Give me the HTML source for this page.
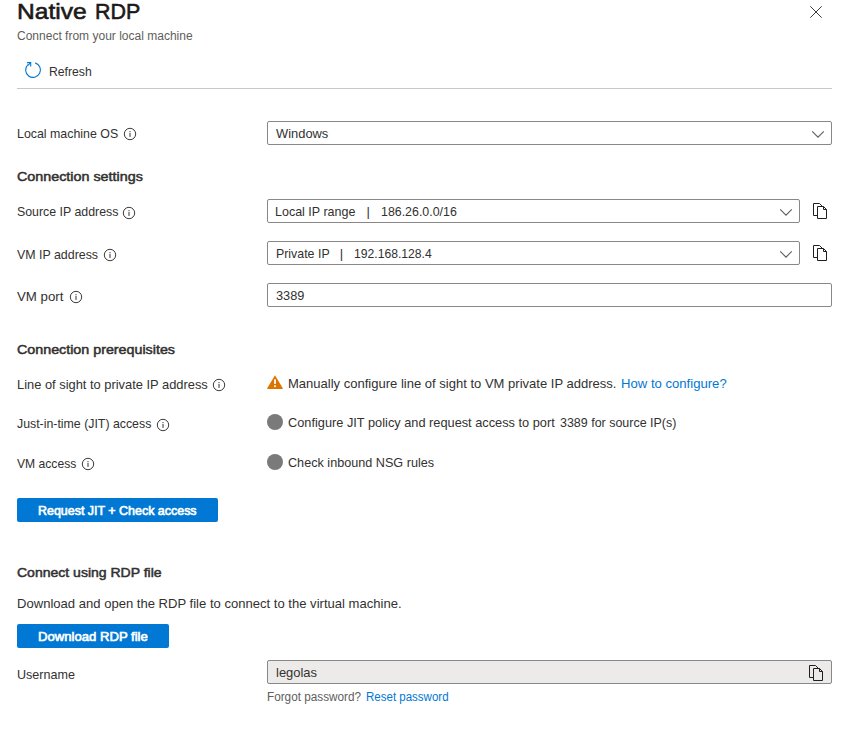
<!DOCTYPE html>
<html lang="en">
<head>
<meta charset="utf-8">
<title>Native RDP</title>
<style>
*{box-sizing:border-box;margin:0;padding:0}
html,body{width:849px;height:748px;background:#fff;overflow:hidden}
body{font-family:"Liberation Sans",Arial,sans-serif;font-size:13px;color:#323130;position:relative}
.t{position:absolute;display:block;white-space:nowrap;transform-origin:0 0}
h1,h2{font-weight:normal;font-size:inherit}
a{text-decoration:none;cursor:pointer}
.d{position:absolute}
.box{position:absolute;border:1px solid #8a8886;border-radius:2px;height:24px;background:#fff}
.ro{background:#edebe9}
.btn{position:absolute;left:17px;height:24px;background:#0078d4;border-radius:2px}
svg{position:absolute;overflow:visible}
</style>
</head>
<body>
<!-- close -->
<svg style="left:810px;top:6px" width="12" height="12" viewBox="0 0 12 12"><path d="M0.3 0.3L11.7 11.7M11.7 0.3L0.3 11.7" stroke="#3b3a39" stroke-width="1" fill="none"/></svg>
<!-- refresh -->
<svg style="left:25px;top:62px" width="16" height="16" viewBox="0 0 16 16"><path d="M10.2 0.9A7.4 7.4 0 1 1 2.9 2.65" stroke="#0078d4" stroke-width="1.1" fill="none"/><path d="M1.9 0.6H5.7V4.4" stroke="#0078d4" stroke-width="1.1" fill="none"/><path d="M5.7 0.6L2.9 3.4" stroke="#0078d4" stroke-width="1.1" fill="none"/></svg>
<div class="d" style="left:17px;top:88px;width:815px;height:1px;background:#c8c8c8"></div>

<div class="box" style="left:267px;top:121px;width:565px"></div>
<svg style="left:812px;top:130px" width="12" height="8" viewBox="0 0 12 8"><path d="M0.2 1.3L6 7.1L11.8 1.3" stroke="#605e5c" stroke-width="1.1" fill="none"/></svg>

<div class="box" style="left:267px;top:199px;width:533px"></div>
<svg style="left:780px;top:208px" width="12" height="8" viewBox="0 0 12 8"><path d="M0.2 1.3L6 7.1L11.8 1.3" stroke="#605e5c" stroke-width="1.1" fill="none"/></svg>
<div class="box" style="left:267px;top:241px;width:533px"></div>
<svg style="left:780px;top:250px" width="12" height="8" viewBox="0 0 12 8"><path d="M0.2 1.3L6 7.1L11.8 1.3" stroke="#605e5c" stroke-width="1.1" fill="none"/></svg>
<div class="box" style="left:267px;top:283px;width:565px"></div>

<div class="btn" style="top:498px;width:201px"></div>
<div class="btn" style="top:624px;width:152px"></div>
<div class="box ro" style="left:267px;top:660px;width:565px"></div>

<!-- status icons -->
<svg style="left:267px;top:375px" width="16" height="14" viewBox="0 0 16 14"><path d="M8 0.3L15.8 13.2Q16 14 15.2 14H0.8Q0 14 0.2 13.2Z" fill="#db7500"/><rect x="7.1" y="4.3" width="1.8" height="4.6" fill="#fff"/><rect x="7.1" y="10.3" width="1.8" height="1.8" fill="#fff"/></svg>
<div class="d" style="left:267px;top:414px;width:16px;height:16px;border-radius:50%;background:#7a7a7a"></div>
<div class="d" style="left:267px;top:454px;width:16px;height:16px;border-radius:50%;background:#7a7a7a"></div>
<!-- info icons -->
<svg style="left:122.9px;top:127.0px" width="14" height="14" viewBox="0 0 14 14"><circle cx="7" cy="7" r="5.7" stroke="#323130" stroke-width="0.95" fill="none"/><rect x="6.5" y="4.1" width="1" height="1" fill="#323130"/><rect x="6.5" y="5.9" width="1" height="4" fill="#323130"/></svg>
<svg style="left:122.4px;top:206.0px" width="14" height="14" viewBox="0 0 14 14"><circle cx="7" cy="7" r="5.7" stroke="#323130" stroke-width="0.95" fill="none"/><rect x="6.5" y="4.1" width="1" height="1" fill="#323130"/><rect x="6.5" y="5.9" width="1" height="4" fill="#323130"/></svg>
<svg style="left:103.0px;top:247.8px" width="14" height="14" viewBox="0 0 14 14"><circle cx="7" cy="7" r="5.7" stroke="#323130" stroke-width="0.95" fill="none"/><rect x="6.5" y="4.1" width="1" height="1" fill="#323130"/><rect x="6.5" y="5.9" width="1" height="4" fill="#323130"/></svg>
<svg style="left:68.5px;top:289.9px" width="14" height="14" viewBox="0 0 14 14"><circle cx="7" cy="7" r="5.7" stroke="#323130" stroke-width="0.95" fill="none"/><rect x="6.5" y="4.1" width="1" height="1" fill="#323130"/><rect x="6.5" y="5.9" width="1" height="4" fill="#323130"/></svg>
<svg style="left:212.2px;top:378.3px" width="14" height="14" viewBox="0 0 14 14"><circle cx="7" cy="7" r="5.7" stroke="#323130" stroke-width="0.95" fill="none"/><rect x="6.5" y="4.1" width="1" height="1" fill="#323130"/><rect x="6.5" y="5.9" width="1" height="4" fill="#323130"/></svg>
<svg style="left:156.1px;top:418.0px" width="14" height="14" viewBox="0 0 14 14"><circle cx="7" cy="7" r="5.7" stroke="#323130" stroke-width="0.95" fill="none"/><rect x="6.5" y="4.1" width="1" height="1" fill="#323130"/><rect x="6.5" y="5.9" width="1" height="4" fill="#323130"/></svg>
<svg style="left:81.0px;top:457.2px" width="14" height="14" viewBox="0 0 14 14"><circle cx="7" cy="7" r="5.7" stroke="#323130" stroke-width="0.95" fill="none"/><rect x="6.5" y="4.1" width="1" height="1" fill="#323130"/><rect x="6.5" y="5.9" width="1" height="4" fill="#323130"/></svg>
<!-- copy icons -->
<svg style="left:813px;top:203px" width="15" height="16" viewBox="0 0 15 16"><path d="M4.5 12.5H0.5V0.5H6.5L9.5 3.5" stroke="#201f1e" stroke-width="1" fill="none"/><path d="M10.5 3.5H4.5V15.5H13.5V6.5L10.5 3.5V6.5H13.5" stroke="#201f1e" stroke-width="1" fill="none" stroke-linejoin="miter"/></svg>
<svg style="left:813px;top:245px" width="15" height="16" viewBox="0 0 15 16"><path d="M4.5 12.5H0.5V0.5H6.5L9.5 3.5" stroke="#201f1e" stroke-width="1" fill="none"/><path d="M10.5 3.5H4.5V15.5H13.5V6.5L10.5 3.5V6.5H13.5" stroke="#201f1e" stroke-width="1" fill="none" stroke-linejoin="miter"/></svg>
<svg style="left:809px;top:665px" width="15" height="16" viewBox="0 0 15 16"><path d="M4.5 12.5H0.5V0.5H6.5L9.5 3.5" stroke="#201f1e" stroke-width="1" fill="none"/><path d="M10.5 3.5H4.5V15.5H13.5V6.5L10.5 3.5V6.5H13.5" stroke="#201f1e" stroke-width="1" fill="none" stroke-linejoin="miter"/></svg>

<h1><span class="t" style="left:16.50px;top:-3.30px;font-size:22.5px;line-height:29px;font-weight:normal;-webkit-text-stroke:0.6px #1b1a19;color:#1b1a19;transform:scaleX(1.0917)">Native</span>
<span class="t" style="left:94.50px;top:-3.30px;font-size:22.5px;line-height:29px;font-weight:normal;-webkit-text-stroke:0.6px #1b1a19;color:#1b1a19;transform:scaleX(0.9517)">RDP</span></h1>
<p class="t" style="left:16.50px;top:27.84px;font-size:12px;line-height:16px;font-weight:normal;color:#605e5c;transform:scaleX(1.0012)">Connect from your local machine</p>
<div class="t" style="left:48.50px;top:62.80px;font-size:13px;line-height:17px;font-weight:normal;color:#323130;transform:scaleX(0.9371)">Refresh</div>
<label class="t" style="left:16.50px;top:125.00px;font-size:13px;line-height:17px;font-weight:normal;color:#323130;transform:scaleX(0.9523)">Local machine OS</label>
<div class="t" style="left:275.50px;top:125.00px;font-size:13px;line-height:17px;font-weight:normal;color:#323130;transform:scaleX(0.9919)">Windows</div>
<h2 class="t" style="left:16.50px;top:167.80px;font-size:13px;line-height:17px;font-weight:normal;-webkit-text-stroke:0.5px #323130;color:#323130;transform:scaleX(1.1019)">Connection settings</h2>
<label class="t" style="left:16.50px;top:203.00px;font-size:13px;line-height:17px;font-weight:normal;color:#323130;transform:scaleX(0.9504)">Source IP address</label>
<div class="t" style="left:274.50px;top:203.00px;font-size:13px;line-height:17px;font-weight:normal;color:#323130;transform:scaleX(0.9609)">Local IP range</div>
<div class="t" style="left:366.50px;top:203.00px;font-size:13px;line-height:17px;font-weight:normal;color:#323130;transform:scaleX(1.0000)">|</div>
<div class="t" style="left:380.50px;top:203.00px;font-size:13px;line-height:17px;font-weight:normal;color:#323130;transform:scaleX(0.9531)">186.26.0.0/16</div>
<label class="t" style="left:16.50px;top:245.70px;font-size:13px;line-height:17px;font-weight:normal;color:#323130;transform:scaleX(0.9534)">VM IP address</label>
<div class="t" style="left:275.50px;top:245.00px;font-size:13px;line-height:17px;font-weight:normal;color:#323130;transform:scaleX(0.9516)">Private IP</div>
<div class="t" style="left:339.75px;top:245.00px;font-size:13px;line-height:17px;font-weight:normal;color:#323130;transform:scaleX(1.0000)">|</div>
<div class="t" style="left:353.50px;top:245.00px;font-size:13px;line-height:17px;font-weight:normal;color:#323130;transform:scaleX(0.9351)">192.168.128.4</div>
<label class="t" style="left:16.50px;top:287.80px;font-size:13px;line-height:17px;font-weight:normal;color:#323130;transform:scaleX(1.0188)">VM port</label>
<div class="t" style="left:275.50px;top:287.20px;font-size:13px;line-height:17px;font-weight:normal;color:#323130;transform:scaleX(0.9815)">3389</div>
<h2 class="t" style="left:16.50px;top:340.70px;font-size:13px;line-height:17px;font-weight:normal;-webkit-text-stroke:0.5px #323130;color:#323130;transform:scaleX(1.0984)">Connection prerequisites</h2>
<label class="t" style="left:16.50px;top:376.30px;font-size:13px;line-height:17px;font-weight:normal;color:#323130;transform:scaleX(0.9899)">Line of sight to private IP address</label>
<div class="t" style="left:287.50px;top:375.20px;font-size:13px;line-height:17px;font-weight:normal;color:#323130;transform:scaleX(1.0018)">Manually configure line of sight to VM private IP address.</div>
<a class="t" style="left:620.50px;top:375.20px;font-size:13px;line-height:17px;font-weight:normal;color:#0078d4;transform:scaleX(1.0088)">How to configure?</a>
<label class="t" style="left:16.50px;top:415.30px;font-size:13px;line-height:17px;font-weight:normal;color:#323130;transform:scaleX(0.9486)">Just-in-time (JIT) access</label>
<div class="t" style="left:287.50px;top:414.20px;font-size:13px;line-height:17px;font-weight:normal;color:#323130;transform:scaleX(0.9826)">Configure JIT policy and request access to port</div>
<div class="t" style="left:559.50px;top:414.20px;font-size:13px;line-height:17px;font-weight:normal;color:#323130;transform:scaleX(0.9587)">3389 for source IP(s)</div>
<label class="t" style="left:16.50px;top:454.90px;font-size:13px;line-height:17px;font-weight:normal;color:#323130;transform:scaleX(0.9323)">VM access</label>
<div class="t" style="left:287.50px;top:453.80px;font-size:13px;line-height:17px;font-weight:normal;color:#323130;transform:scaleX(0.9719)">Check inbound NSG rules</div>
<div class="t" style="left:37.50px;top:502.40px;font-size:13px;line-height:17px;font-weight:normal;-webkit-text-stroke:0.65px #ffffff;color:#ffffff;transform:scaleX(0.9577)">Request JIT + Check access</div>
<h2 class="t" style="left:16.50px;top:563.80px;font-size:13px;line-height:17px;font-weight:normal;-webkit-text-stroke:0.5px #323130;color:#323130;transform:scaleX(1.0779)">Connect using RDP file</h2>
<p class="t" style="left:16.50px;top:595.00px;font-size:13px;line-height:17px;font-weight:normal;color:#323130;transform:scaleX(1.0047)">Download and open the RDP file to connect to the virtual machine.</p>
<div class="t" style="left:37.50px;top:628.20px;font-size:13px;line-height:17px;font-weight:normal;-webkit-text-stroke:0.65px #ffffff;color:#ffffff;transform:scaleX(1.0086)">Download RDP file</div>
<label class="t" style="left:16.50px;top:666.00px;font-size:13px;line-height:17px;font-weight:normal;color:#323130;transform:scaleX(0.9661)">Username</label>
<div class="t" style="left:275.50px;top:663.80px;font-size:13px;line-height:17px;font-weight:normal;color:#323130;transform:scaleX(0.9956)">legolas</div>
<div class="t" style="left:266.50px;top:688.94px;font-size:12px;line-height:16px;font-weight:normal;color:#605e5c;transform:scaleX(0.9789)">Forgot password?</div>
<a class="t" style="left:365.50px;top:688.94px;font-size:12px;line-height:16px;font-weight:normal;color:#0078d4;transform:scaleX(0.9594)">Reset password</a>
</body>
</html>
